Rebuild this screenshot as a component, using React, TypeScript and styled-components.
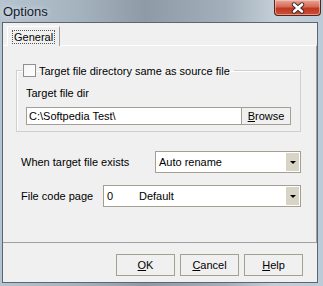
import styled, { createGlobalStyle } from "styled-components";

const GlobalStyle = createGlobalStyle`
  html, body {
    margin: 0;
    padding: 0;
    background: #bcd2e6;
  }
`;

const Window = styled.div`
  width: 323px;
  height: 286px;
  display: flex;
  flex-direction: column;
  background: linear-gradient(90deg, #b6c4d0 0%, #a4b2be 25%, #8e9ba6 45%, #a3afba 70%, #c3ced7 85%, #bccbd8 100%);
  font-family: "Liberation Sans", Arial, sans-serif;
  font-size: 11px;
  color: #000;
  overflow: hidden;
`;

const TitleBar = styled.div`
  height: 22px;
  display: flex;
  align-items: flex-start;
  justify-content: space-between;
`;

const Caption = styled.span`
  font-size: 13px;
  color: #141a2c;
  margin: 4px 0 0 3px;
  text-shadow: 0 0 6px rgba(255, 255, 255, 0.8);
`;

const CloseButton = styled.div`
  width: 47px;
  height: 16px;
  margin-right: 2px;
  box-sizing: border-box;
  border: 1px solid #5a2218;
  border-top: none;
  border-radius: 0 0 4px 4px;
  background: linear-gradient(180deg, #e8a69a 0%, #d66a55 45%, #c0381f 55%, #c9503a 100%);
  box-shadow: inset 0 0 0 1px rgba(255, 220, 210, 0.5);
  display: flex;
  align-items: center;
  justify-content: center;
`;

const Client = styled.div`
  flex: 1;
  margin: 0 5px 3px 2px;
  border: 1px solid #5c6670;
  background: #f0f0f0;
  display: flex;
  flex-direction: column;
`;

const TabStrip = styled.div`
  display: flex;
  padding: 3px 0 0 4px;
  height: 19px;
`;

const Tab = styled.div`
  width: 53px;
  height: 20px;
  box-sizing: border-box;
  border: 1px solid #fff;
  border-right-color: #a0a0a0;
  border-bottom: none;
  background: #f0f0f0;
  display: flex;
  align-items: center;
  padding-left: 5px;
  position: relative;
  z-index: 1;
  span {
    outline: 1px dotted #555;
    outline-offset: 0;
    padding: 0 1px;
  }
`;

const Panel = styled.div`
  height: 196px;
  border-top: 1px solid #fff;
  border-right: 1px solid #a0a0a0;
  border-bottom: 1px solid #a0a0a0;
  display: flex;
  flex-direction: column;
  padding: 0 15px 0 13px;
`;

const GroupBox = styled.fieldset`
  margin: 18px 0 0 0;
  padding: 10px 9px 6px 9px;
  border: 1px solid #cfcfcf;
  box-shadow: inset 1px 1px 0 #fff;
  display: flex;
  flex-direction: column;
  gap: 8px;
`;

const Legend = styled.legend`
  padding: 0 4px 0 1px;
  margin-left: -4px;
  display: flex;
  align-items: center;
  gap: 3px;
`;

const CheckBox = styled.span`
  width: 13px;
  height: 13px;
  box-sizing: border-box;
  border: 1px solid #8f8f8f;
  background: linear-gradient(135deg, #f4f4f4, #fff);
`;

const FieldRow = styled.div`
  display: flex;
  height: 18px;
`;

const TextInput = styled.div`
  flex: 1;
  box-sizing: border-box;
  border: 1px solid #a59f93;
  background: #fff;
  display: flex;
  align-items: center;
  padding-left: 2px;
`;

const SmallButton = styled.div`
  width: 49px;
  box-sizing: border-box;
  border: 1px solid #a59f93;
  border-left: none;
  background: #f0f0f0;
  display: flex;
  align-items: center;
  justify-content: center;
`;

const Rows = styled.div`
  display: flex;
  flex-direction: column;
  gap: 12px;
  margin: 19px 0 0 5px;
`;

const Row = styled.div`
  display: flex;
  align-items: center;
  justify-content: space-between;
`;

const Combo = styled.div<{ $width: number }>`
  width: ${(p) => p.$width}px;
  height: 22px;
  box-sizing: border-box;
  border: 1px solid #a59f93;
  background: #fff;
  display: flex;
  align-items: center;
`;

const ComboText = styled.span`
  flex: 1;
  padding-left: 3px;
  display: flex;
`;

const CodeCell = styled.span`
  width: 32px;
`;

const ComboArrow = styled.div`
  width: 13px;
  height: 18px;
  margin-right: 1px;
  background: #d8d4c6;
  display: flex;
  align-items: center;
  justify-content: center;
  &::after {
    content: "";
    border-left: 3px solid transparent;
    border-right: 3px solid transparent;
    border-top: 3px solid #000;
  }
`;

const ButtonBar = styled.div`
  display: flex;
  justify-content: flex-end;
  gap: 5px;
  padding: 11px 14px 0 0;
`;

const DialogButton = styled.div`
  width: 59px;
  height: 22px;
  box-sizing: border-box;
  border: 1px solid #a59f93;
  background: #f0f0f0;
  display: flex;
  align-items: center;
  justify-content: center;
`;

const Key = styled.u`
  text-decoration-thickness: 1px;
`;

export default function App() {
  return (
    <>
      <GlobalStyle />
      <Window>
        <TitleBar>
          <Caption>Options</Caption>
          <CloseButton>
            <svg width="16" height="12" viewBox="0 0 16 12">
              <path d="M4 2.5 L12 9.5 M12 2.5 L4 9.5" stroke="#3a2a28" strokeWidth="4.4" strokeLinecap="round" />
              <path d="M4 2.5 L12 9.5 M12 2.5 L4 9.5" stroke="#fff" strokeWidth="2.6" strokeLinecap="round" />
            </svg>
          </CloseButton>
        </TitleBar>
        <Client>
          <TabStrip>
            <Tab>
              <span>General</span>
            </Tab>
          </TabStrip>
          <Panel>
            <GroupBox>
              <Legend>
                <CheckBox />
                Target file directory same as source file
              </Legend>
              <span>Target file dir</span>
              <FieldRow>
                <TextInput>C:\Softpedia Test\</TextInput>
                <SmallButton>
                  <span>
                    <Key>B</Key>rowse
                  </span>
                </SmallButton>
              </FieldRow>
            </GroupBox>
            <Rows>
              <Row>
                <span>When target file exists</span>
                <Combo $width={146}>
                  <ComboText>Auto rename</ComboText>
                  <ComboArrow />
                </Combo>
              </Row>
              <Row>
                <span>File code page</span>
                <Combo $width={198}>
                  <ComboText>
                    <CodeCell>0</CodeCell>Default
                  </ComboText>
                  <ComboArrow />
                </Combo>
              </Row>
            </Rows>
          </Panel>
          <ButtonBar>
            <DialogButton>
              <span>
                <Key>O</Key>K
              </span>
            </DialogButton>
            <DialogButton>
              <span>
                <Key>C</Key>ancel
              </span>
            </DialogButton>
            <DialogButton>
              <span>
                <Key>H</Key>elp
              </span>
            </DialogButton>
          </ButtonBar>
        </Client>
      </Window>
    </>
  );
}
